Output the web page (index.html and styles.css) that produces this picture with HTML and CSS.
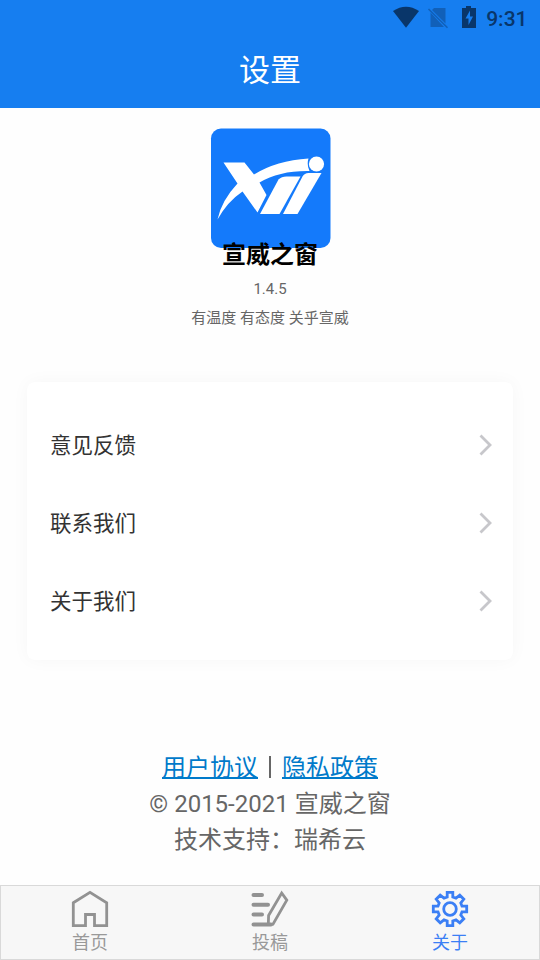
FILE: index.html
```html
<!DOCTYPE html>
<html lang="zh-CN">
<head>
<meta charset="utf-8">
<title>设置</title>
<link rel="stylesheet" href="styles.css">
</head>
<body>
<div class="app">
  <header class="header">
    <div class="status">
      <svg class="status-icons" width="86" height="36" viewBox="0 0 86 36">
        <path fill="#09366a" d="M0 11Q13 2.500 26 11L13 27.800Z"/>
        <path fill="#1160b9" d="M41 8H52.500V23.500L39 10ZM37.500 12.500L51 27H37.500Z"/>
        <path stroke="#1160b9" stroke-width="1.600" d="M35.500 9L54.500 27.800"/>
        <path fill="#09366a" d="M69 8H73V6H78V8H83V28H69Z"/>
        <path fill="#167ef0" d="M77 10.500L72.500 18.500H75.500V25L80 16.500H77Z"/>
      </svg>
      <span class="clock">9:31</span>
    </div>
    <h1 class="title">设置</h1>
  </header>
  <main class="main">
    <section class="brand">
      <svg class="logo" width="121" height="120" viewBox="0 0 121 120">
        <rect x="1" y="0.500" width="119.500" height="119.500" rx="10" fill="#147afb"/>
        <g fill="#fff" transform="translate(.5 .5)">
          <path d="M13 34H34L43.500 46Q66 32 98 30Q96 36 99 42.500Q69 42 49 54L56 66.500L47 84L32 63Q17 73 7 91Q11 72 27 55Z"/>
          <circle cx="106" cy="35.500" r="7.600"/>
          <path d="M68 51Q71 48 76 48H90L69 85.500H49.500Z"/>
          <path d="M92 48Q94 44.500 98 44.500H111L87 85.500H72.500Z"/>
        </g>
      </svg>
      <h2 class="name">宣威之窗</h2>
      <p class="version">1.4.5</p>
      <p class="slogan">有温度 有态度 关乎宣威</p>
    </section>
    <nav class="card">
      <a class="row"><span class="label">意见反馈</span><svg class="chevron" width="14" height="22" viewBox="0 0 14 22"><path d="M1.500 1.500L11 11L1.500 20.500"/></svg></a>
      <a class="row"><span class="label">联系我们</span><svg class="chevron" width="14" height="22" viewBox="0 0 14 22"><path d="M1.500 1.500L11 11L1.500 20.500"/></svg></a>
      <a class="row"><span class="label">关于我们</span><svg class="chevron" width="14" height="22" viewBox="0 0 14 22"><path d="M1.500 1.500L11 11L1.500 20.500"/></svg></a>
    </nav>
    <footer class="legal">
      <div><a class="link">用户协议</a><span class="bar"></span><a class="link">隐私政策</a></div>
      <div>© 2015-2021 宣威之窗</div>
      <div>技术支持：瑞希云</div>
    </footer>
  </main>
  <nav class="tabs">
    <a class="tab">
      <svg width="38" height="38" viewBox="0 0 38 38"><path d="M2.300 12.800L19 2.300L35.700 12.800V35.700H23.500V24.500H14.500V35.700H2.300Z"/></svg>
      <span>首页</span>
    </a>
    <a class="tab">
      <svg width="38" height="38" viewBox="0 0 38 38"><path class="thick" d="M2.500 5H11M2.500 14.700H17M2.500 24.500H11M2.500 34.500H20"/><path d="M30.700 3L35.800 10.200L22 34.200L17.300 34.500L17.600 25.500Z"/></svg>
      <span>投稿</span>
    </a>
    <a class="tab active">
      <svg width="38" height="38" viewBox="0 0 38 38"><path d="M16.200 2.300H21.800V7L25 8.200L28.800 5.200L32.800 9.200L29.800 13L31 16.200H35.700V21.800H31L29.800 25L32.800 28.800L28.800 32.800L25 29.800L21.800 31V35.700H16.200V31L13 29.800L9.200 32.800L5.200 28.800L8.200 25L7 21.800H2.300V16.200H7L8.200 13L5.200 9.200L9.200 5.200L13 8.200L16.200 7Z"/><circle cx="19" cy="19" r="6.300"/></svg>
      <span>关于</span>
    </a>
  </nav>
</div>
</body>
</html>
```
FILE: styles.css
```css
* { box-sizing: border-box; }
body {
  margin: 0;
  background: #fefefe;
  font-family: Roboto, "Noto Sans CJK SC", sans-serif;
  color: #666;
}
h1, h2, p { margin: 0; }
.app { display: flex; flex-direction: column; height: 960px; }
.header { height: 108px; background: #167ef0; }
.status {
  display: flex;
  justify-content: flex-end;
  height: 36px;
  padding-right: 12.500px;
}
.status-icons { margin-right: 7px; }
.clock {
  font-size: 21px;
  font-weight: 500;
  line-height: 39px;
  color: #09366a;
}
.title {
  font-size: 31px;
  font-weight: 400;
  line-height: 70px;
  text-align: center;
  color: #fff;
}
.main { flex: 1; padding-top: 20px; }
.brand {
  display: flex;
  flex-direction: column;
  align-items: center;
  height: 254px;
}
.logo { flex: none; }
.name {
  margin-top: -11px;
  font-size: 24px;
  font-weight: 700;
  line-height: 36px;
  color: #000;
  position: relative;
}
.version { margin-top: 2px; font-size: 15px; line-height: 29px; }
.slogan { font-size: 15px; line-height: 29px; }
.card {
  height: 278px;
  margin: 0 27px;
  padding: 24px 20px 0 23px;
  border-radius: 8px;
  background: #fff;
  box-shadow: 0 0 18px rgba(0, 0, 0, .035);
}
.row {
  display: flex;
  align-items: center;
  justify-content: space-between;
  height: 78px;
  font-size: 21.500px;
  color: #333;
}
.label { padding-bottom: 3px; }
.chevron { fill: none; stroke: #c7c7cb; stroke-width: 2.800; }
.legal {
  margin-top: 90px;
  font-size: 24px;
  line-height: 36px;
  text-align: center;
}
.link {
  color: #007aca;
  text-decoration: underline;
  text-decoration-thickness: 1.500px;
}
.bar {
  display: inline-block;
  width: 2px;
  height: 22px;
  margin: 0 11px;
  background: #666;
  vertical-align: -2px;
}
.tabs {
  display: flex;
  height: 75px;
  background: #f7f7f7;
  box-shadow: inset 0 0 0 1px #d9d9d9;
}
.tab {
  flex: 1;
  display: flex;
  flex-direction: column;
  align-items: center;
  padding-top: 5px;
  font-size: 18px;
  line-height: 30px;
  color: #999;
}
.tab svg { fill: none; stroke: #929292; stroke-width: 2.800; }
.tab .thick { stroke-width: 4; stroke-linecap: round; }
.tab.active { color: #3b7ff5; }
.tab.active svg { stroke: #3b7ff5; }
```
